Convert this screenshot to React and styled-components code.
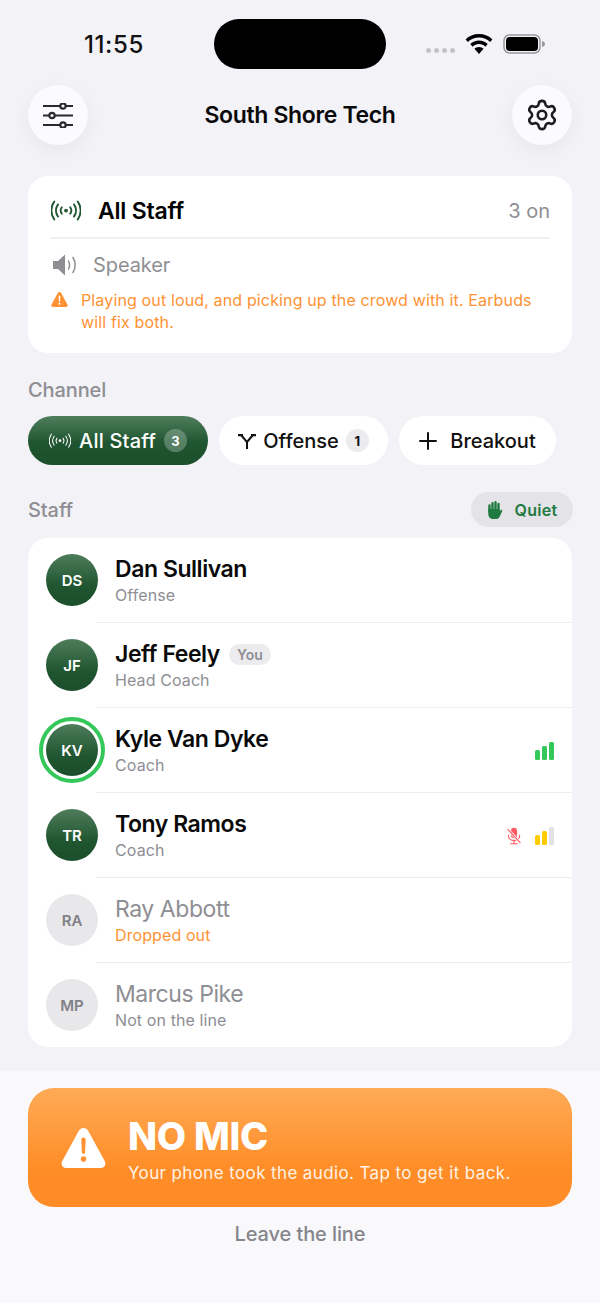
import React from "react";
import styled, { createGlobalStyle } from "styled-components";
import { Settings } from "lucide-react";

const Global = createGlobalStyle`
  html, body { margin: 0; padding: 0; background: #f2f2f7; }
  * { box-sizing: border-box; }
  body { font-family: Inter, "Liberation Sans", sans-serif; color: #000; -webkit-font-smoothing: antialiased; }
`;

const Screen = styled.div`
  width: 600px; height: 1303px; overflow: hidden; display: flex; flex-direction: column; background: #f2f2f7;
`;
const StatusBar = styled.div`
  height: 85px; flex: none; padding: 19px 28px 0 84px; display: flex; align-items: flex-start;
`;
const Time = styled.div`
  width: 130px; font-size: 24px; line-height: 52px; font-weight: 500; color: #111; letter-spacing: 0.6px;
`;
const Island = styled.div`
  width: 172px; height: 50px; border-radius: 25px; background: #000; flex: none;
`;
const StatusIcons = styled.div`
  margin-left: 40px; height: 50px; display: flex; align-items: center; gap: 10px;
`;
const Dots = styled.div`
  display: flex; gap: 3px; margin-top: 13px;
  span { width: 5px; height: 5px; border-radius: 50%; background: #c4c4c8; }
`;
const Header = styled.div`
  height: 60px; padding: 0 28px; display: flex; align-items: center; justify-content: space-between; flex: none;
`;
const RoundButton = styled.div`
  width: 60px; height: 60px; border-radius: 50%; background: #fbfbfe; display: flex; align-items: center; justify-content: center;
  box-shadow: 0 6px 20px rgba(0,0,0,.05); color: #1c1c1e;
`;
const Title = styled.div`
  font-size: 23px; font-weight: 600; letter-spacing: -0.35px; color: #0a0a0a;
`;
const Main = styled.div`
  flex: 1; padding: 31px 28px 0; display: flex; flex-direction: column; min-height: 0;
`;
const Card = styled.div`
  background: #fff; border-radius: 20px;
`;
const LineCard = styled(Card)`
  height: 177px; padding: 0 22px;
`;
const LineTop = styled.div`
  height: 63px; padding: 8px 0 0 1px; display: flex; align-items: center; border-bottom: 2px solid #f0f0f3;
`;
const LineName = styled.div`
  font-size: 23px; font-weight: 600; margin-left: 17px; flex: 1; letter-spacing: -0.2px;
`;
const LineCount = styled.div`
  font-size: 20px; color: #8e8e93;
`;
const Output = styled.div`
  height: 51px; display: flex; align-items: center; gap: 14px; font-size: 20px; color: #8e8e93; padding: 0 0 0 3px; letter-spacing: -0.1px;
`;
const Warning = styled.div`
  display: flex; gap: 13px; color: #ff9233; font-size: 16px; line-height: 22px; margin: -1px 0 0 1px; letter-spacing: .14px;
  svg { flex: none; margin-top: 3px; }
`;
const SectionLabel = styled.div`
  font-size: 20px; font-weight: 500; color: #8e8e93; letter-spacing: -0.1px; line-height: 24px;
`;
const ChannelLabel = styled(SectionLabel)`
  margin-top: 25px;
`;
const Pills = styled.div`
  display: flex; gap: 11px; margin-top: 14px;
`;
const Pill = styled.div`
  height: 49px; width: ${p => p.$w}px; border-radius: 25px; display: flex; align-items: center; justify-content: center; gap: ${p => p.$gap || 8}px;
  font-size: 20px; font-weight: 500; flex: none; letter-spacing: ${p => p.$active ? ".2px" : "0"};
  background: ${p => p.$active ? "linear-gradient(#4f7d5c, #1f5530 55%, #1c4f2b)" : "#fff"};
  color: ${p => p.$active ? "#fff" : "#111"};
`;
const Count = styled.span`
  width: 23px; height: 23px; border-radius: 50%; font-size: 13px; font-weight: 700; display: flex; align-items: center; justify-content: center;
  background: ${p => p.$active ? "rgba(255,255,255,.25)" : "#ececee"};
  color: ${p => p.$active ? "#fff" : "#111"};
`;
const StaffHead = styled.div`
  display: flex; align-items: center; justify-content: space-between; margin-top: 27px; margin-right: -1px;
`;
const Quiet = styled.div`
  width: 102px; height: 35px; border-radius: 18px; background: #e3e3e8; color: #1f7a3f; display: flex; align-items: center; justify-content: center; gap: 12px;
  font-size: 16px; font-weight: 600; letter-spacing: .3px;
`;
const StaffCard = styled(Card)`
  margin-top: 11px; height: 509px; display: flex; flex-direction: column;
`;
const Row = styled.div`
  flex: none; height: 85px; display: flex; align-items: center; position: relative; padding: 0 18px;
  &:not(:last-child)::after {
    content: ""; position: absolute; left: 68px; right: 0; bottom: 0; height: 1.5px; background: #ededf0;
  }
`;
const Avatar = styled.div`
  width: 52px; height: 52px; border-radius: 50%; flex: none; position: relative; display: flex; align-items: center; justify-content: center;
  font-size: 15px; font-weight: 600; margin-top: -1px;
  background: ${p => p.$off ? "#e8e8ea" : "linear-gradient(#4f7d5c, #1f5530 62%, #1c4f2b)"};
  color: ${p => p.$off ? "#808085" : "#fff"};
`;
const Ring = styled.div`
  position: absolute; inset: -7px; border-radius: 50%; border: 4px solid #34c759;
`;
const Info = styled.div`
  margin: -2px 0 0 17px; flex: 1; display: flex; flex-direction: column;
`;
const NameLine = styled.div`
  display: flex; align-items: center; gap: 9px; height: 30px;
`;
const Name = styled.div`
  font-size: 23px; font-weight: ${p => p.$off ? 400 : 600}; color: ${p => p.$off ? "#8e8e93" : "#0a0a0a"}; letter-spacing: -0.45px;
`;
const You = styled.span`
  width: 42px; height: 21px; border-radius: 11px; background: #ececee; color: #8e8e93; font-size: 14px; font-weight: 600; display: flex; align-items: center; justify-content: center;
`;
const Sub = styled.div`
  font-size: 16px; line-height: 20px; margin-top: 1px; letter-spacing: .1px; color: ${p => p.$warn ? "#ff9233" : "#8e8e93"};
`;
const Signals = styled.div`
  display: flex; align-items: center; gap: 14px;
`;
const Bars = styled.div`
  display: flex; align-items: flex-end; gap: 2px; height: 18px;
`;
const Bar = styled.span`
  width: 5px; border-radius: 1.5px; height: ${p => p.$h}px; background: ${p => p.$c};
`;
const Footer = styled.div`
  flex: none; height: 232px; background: #f9f9fc; padding: 17px 28px 0; display: flex; flex-direction: column; align-items: stretch;
`;
const Alert = styled.div`
  height: 119px; border-radius: 26px; background: linear-gradient(#ffab57, #ff8c26 70%); display: flex; align-items: center; padding: 0 0 0 33px; color: #fff;
`;
const AlertText = styled.div`
  margin-left: 22px; padding-top: 4px; display: flex; flex-direction: column;
`;
const AlertTitle = styled.div`
  font-size: 38px; font-weight: 800; line-height: 40px; letter-spacing: -0.3px;
`;
const AlertSub = styled.div`
  font-size: 17px; line-height: 22px; margin-top: 6px; letter-spacing: .38px; color: #fff3e6;
`;
const Leave = styled.div`
  margin-top: 14px; text-align: center; font-size: 20px; font-weight: 500; line-height: 26px; color: #85858b; letter-spacing: -0.1px;
`;

const Wifi = () => (
  <svg width="28" height="20" viewBox="0 0 28 20"><g fill="#000">
    <path d="M14 0C8.6 0 4 2 .6 5.4l2.3 2.7C5.7 5.300 9.600 3.600 14 3.600s8.300 1.700 11.100 4.500l2.300-2.700C24 2 19.400 0 14 0z"/>
    <path d="M14 6.500c-3.400 0-6.500 1.300-8.700 3.600l2.300 2.700c1.600-1.700 3.900-2.700 6.400-2.700s4.800 1 6.400 2.700l2.300-2.700C20.500 7.800 17.400 6.500 14 6.500z"/>
    <path d="M14 13c-1.900 0-3.500.7-4.500 1.800L14 20l4.500-5.200C17.500 13.700 15.900 13 14 13z"/>
  </g></svg>
);
const Battery = () => (
  <svg width="43" height="20" viewBox="0 0 43 20">
    <rect x="1" y="1" width="36" height="18" rx="5.500" fill="none" stroke="#9a9a9e" strokeWidth="1.500"/>
    <rect x="3" y="3" width="32" height="14" rx="3.800" fill="#000"/>
    <path d="M39 7c2 .5 3 1.500 3 3s-1 2.500-3 3z" fill="#9a9a9e"/>
  </svg>
);
const Sliders = () => (
  <svg width="30" height="25" viewBox="0 0 30 25" fill="none" stroke="#2a2a2c" strokeWidth="2.200">
    <path d="M0 3h17M23 3h7M0 12.500h6M12 12.500h18M0 22h17M23 22h7"/>
    <circle cx="20" cy="3" r="2.700"/><circle cx="9" cy="12.500" r="2.700"/><circle cx="20" cy="22" r="2.700"/>
  </svg>
);
const Radio = ({ size = 30, color = "#1f5530", sw = 2 }) => (
  <svg width={size} height={size * .7} viewBox="0 0 32 22" fill="none" stroke={color} strokeWidth={sw} strokeLinecap="round">
    <circle cx="16" cy="11" r="2" fill={color} stroke="none"/>
    <path d="M11.500 7.500c-1.400 2-1.400 5 0 7M20.500 7.500c1.400 2 1.400 5 0 7"/>
    <path d="M7.500 4.500c-2.800 4-2.800 9 0 13M24.500 4.500c2.800 4 2.800 9 0 13"/>
    <path d="M3.500 1.500c-4 6-4 13 0 19M28.500 1.500c4 6 4 13 0 19"/>
  </svg>
);
const Speaker = () => (
  <svg width="26" height="22" viewBox="0 0 26 22" fill="none">
    <path d="M0 7h5l7-6.500v21L5 15H0z" fill="#8e8e93"/>
    <path d="M15.500 7c1.300 2.500 1.300 5.500 0 8M20 3.500c2.600 4.500 2.600 10.500 0 15" stroke="#8e8e93" strokeWidth="1.500" strokeLinecap="round"/>
  </svg>
);
const Triangle = ({ w, h, fill, mark }) => (
  <svg width={w} height={h} viewBox="0 0 40 36">
    <path d="M20 0c1.900 0 3.300 1 4.300 2.800l14.800 27c1.700 3.100-.300 6.200-3.600 6.200H4.500C1.200 36-.800 32.900.900 29.800l14.800-27C16.700 1 18.100 0 20 0z" fill={fill}/>
    <path d="M18 10.500c0-1.200.9-2 2-2s2 .8 2 2l-.6 11.500c0 .8-.6 1.300-1.400 1.300s-1.400-.5-1.400-1.300z" fill={mark}/>
    <circle cx="20" cy="28" r="2.500" fill={mark}/>
  </svg>
);
const Branch = () => (
  <svg width="18" height="16" viewBox="0 0 18 16" fill="none" stroke="#111" strokeWidth="2">
    <path d="M9 16V9L3.500 2.500M9 9l5.500-6.500"/>
    <path d="M0 1h5v2.200H0zM13 1h5v2.200h-5z" fill="#111" stroke="none"/>
  </svg>
);
const Plus = () => (
  <svg width="18" height="18" viewBox="0 0 18 18" stroke="#111" strokeWidth="2" strokeLinecap="round"><path d="M9 1v16M1 9h16"/></svg>
);
const Hand = () => (
  <svg width="16" height="18" viewBox="0 0 16 18" fill="#1f7a3f">
    <path d="M2.500 4.500v6M5.500 2.200v6M8.500 1.300v7M11.500 3v7" stroke="#1f7a3f" strokeWidth="2.400" strokeLinecap="round" fill="none"/>
    <path d="M1.300 8h11.400v2.500l.9-1.300c.7-1 2.100-.3 1.600.8l-2.400 5.400C12 17 10.500 18 8.500 18h-2c-3 0-5.200-2-5.200-5z"/>
  </svg>
);
const MicOff = () => (
  <svg width="14" height="18" viewBox="0 0 16 19" fill="none">
    <rect x="4.500" y="0" width="7" height="12" rx="3.500" fill="#ff5a62"/>
    <path d="M1.500 8.500c0 3.800 2.900 6 6.500 6s6.500-2.200 6.500-6M8 14.500V18M4 18.300h8" stroke="#ff5a62" strokeWidth="1.300" strokeLinecap="round"/>
    <path d="M1 2l14 15" stroke="#fff" strokeWidth="3"/>
    <path d="M1 2l14 15" stroke="#ff5a62" strokeWidth="1.300" strokeLinecap="round"/>
  </svg>
);
const Signal = ({ colors }) => (
  <Bars>
    {[10, 14, 18].map((h, i) => <Bar key={h} $h={h} $c={colors[i]} />)}
  </Bars>
);

const staff = [
  { i: "DS", n: "Dan Sullivan", s: "Offense" },
  { i: "JF", n: "Jeff Feely", s: "Head Coach", you: true },
  { i: "KV", n: "Kyle Van Dyke", s: "Coach", ring: true, bars: ["#34c759", "#34c759", "#34c759"] },
  { i: "TR", n: "Tony Ramos", s: "Coach", mute: true, bars: ["#ffcc00", "#ffcc00", "#e2e2e4"] },
  { i: "RA", n: "Ray Abbott", s: "Dropped out", off: true, warn: true },
  { i: "MP", n: "Marcus Pike", s: "Not on the line", off: true },
];

export default function App() {
  return (
    <Screen>
      <Global />
      <StatusBar>
        <Time>11:55</Time>
        <Island />
        <StatusIcons>
          <Dots><span /><span /><span /><span /></Dots>
          <Wifi />
          <Battery />
        </StatusIcons>
      </StatusBar>
      <Header>
        <RoundButton><Sliders /></RoundButton>
        <Title>South Shore Tech</Title>
        <RoundButton><Settings size={34} strokeWidth={1.800} /></RoundButton>
      </Header>
      <Main>
        <LineCard>
          <LineTop>
            <Radio />
            <LineName>All Staff</LineName>
            <LineCount>3 on</LineCount>
          </LineTop>
          <Output><Speaker />Speaker</Output>
          <Warning>
            <Triangle w={17} h={15} fill="#ff9233" mark="#fff" />
            <div>Playing out loud, and picking up the crowd with it. Earbuds will fix both.</div>
          </Warning>
        </LineCard>
        <ChannelLabel>Channel</ChannelLabel>
        <Pills>
          <Pill $active $w={180}><Radio size={22} color="#fff" sw={1.500} />All Staff<Count $active>3</Count></Pill>
          <Pill $w={169} $gap={7}><Branch />Offense<Count>1</Count></Pill>
          <Pill $w={157} $gap={13}><Plus />Breakout</Pill>
        </Pills>
        <StaffHead>
          <SectionLabel>Staff</SectionLabel>
          <Quiet><Hand />Quiet</Quiet>
        </StaffHead>
        <StaffCard>
          {staff.map(p => (
            <Row key={p.i}>
              <Avatar $off={p.off}>{p.ring && <Ring />}{p.i}</Avatar>
              <Info>
                <NameLine>
                  <Name $off={p.off}>{p.n}</Name>
                  {p.you && <You>You</You>}
                </NameLine>
                <Sub $warn={p.warn}>{p.s}</Sub>
              </Info>
              {p.bars && (
                <Signals>
                  {p.mute && <MicOff />}
                  <Signal colors={p.bars} />
                </Signals>
              )}
            </Row>
          ))}
        </StaffCard>
      </Main>
      <Footer>
        <Alert>
          <Triangle w={45} h={40} fill="#fff" mark="#ff9233" />
          <AlertText>
            <AlertTitle>NO MIC</AlertTitle>
            <AlertSub>Your phone took the audio. Tap to get it back.</AlertSub>
          </AlertText>
        </Alert>
        <Leave>Leave the line</Leave>
      </Footer>
    </Screen>
  );
}
